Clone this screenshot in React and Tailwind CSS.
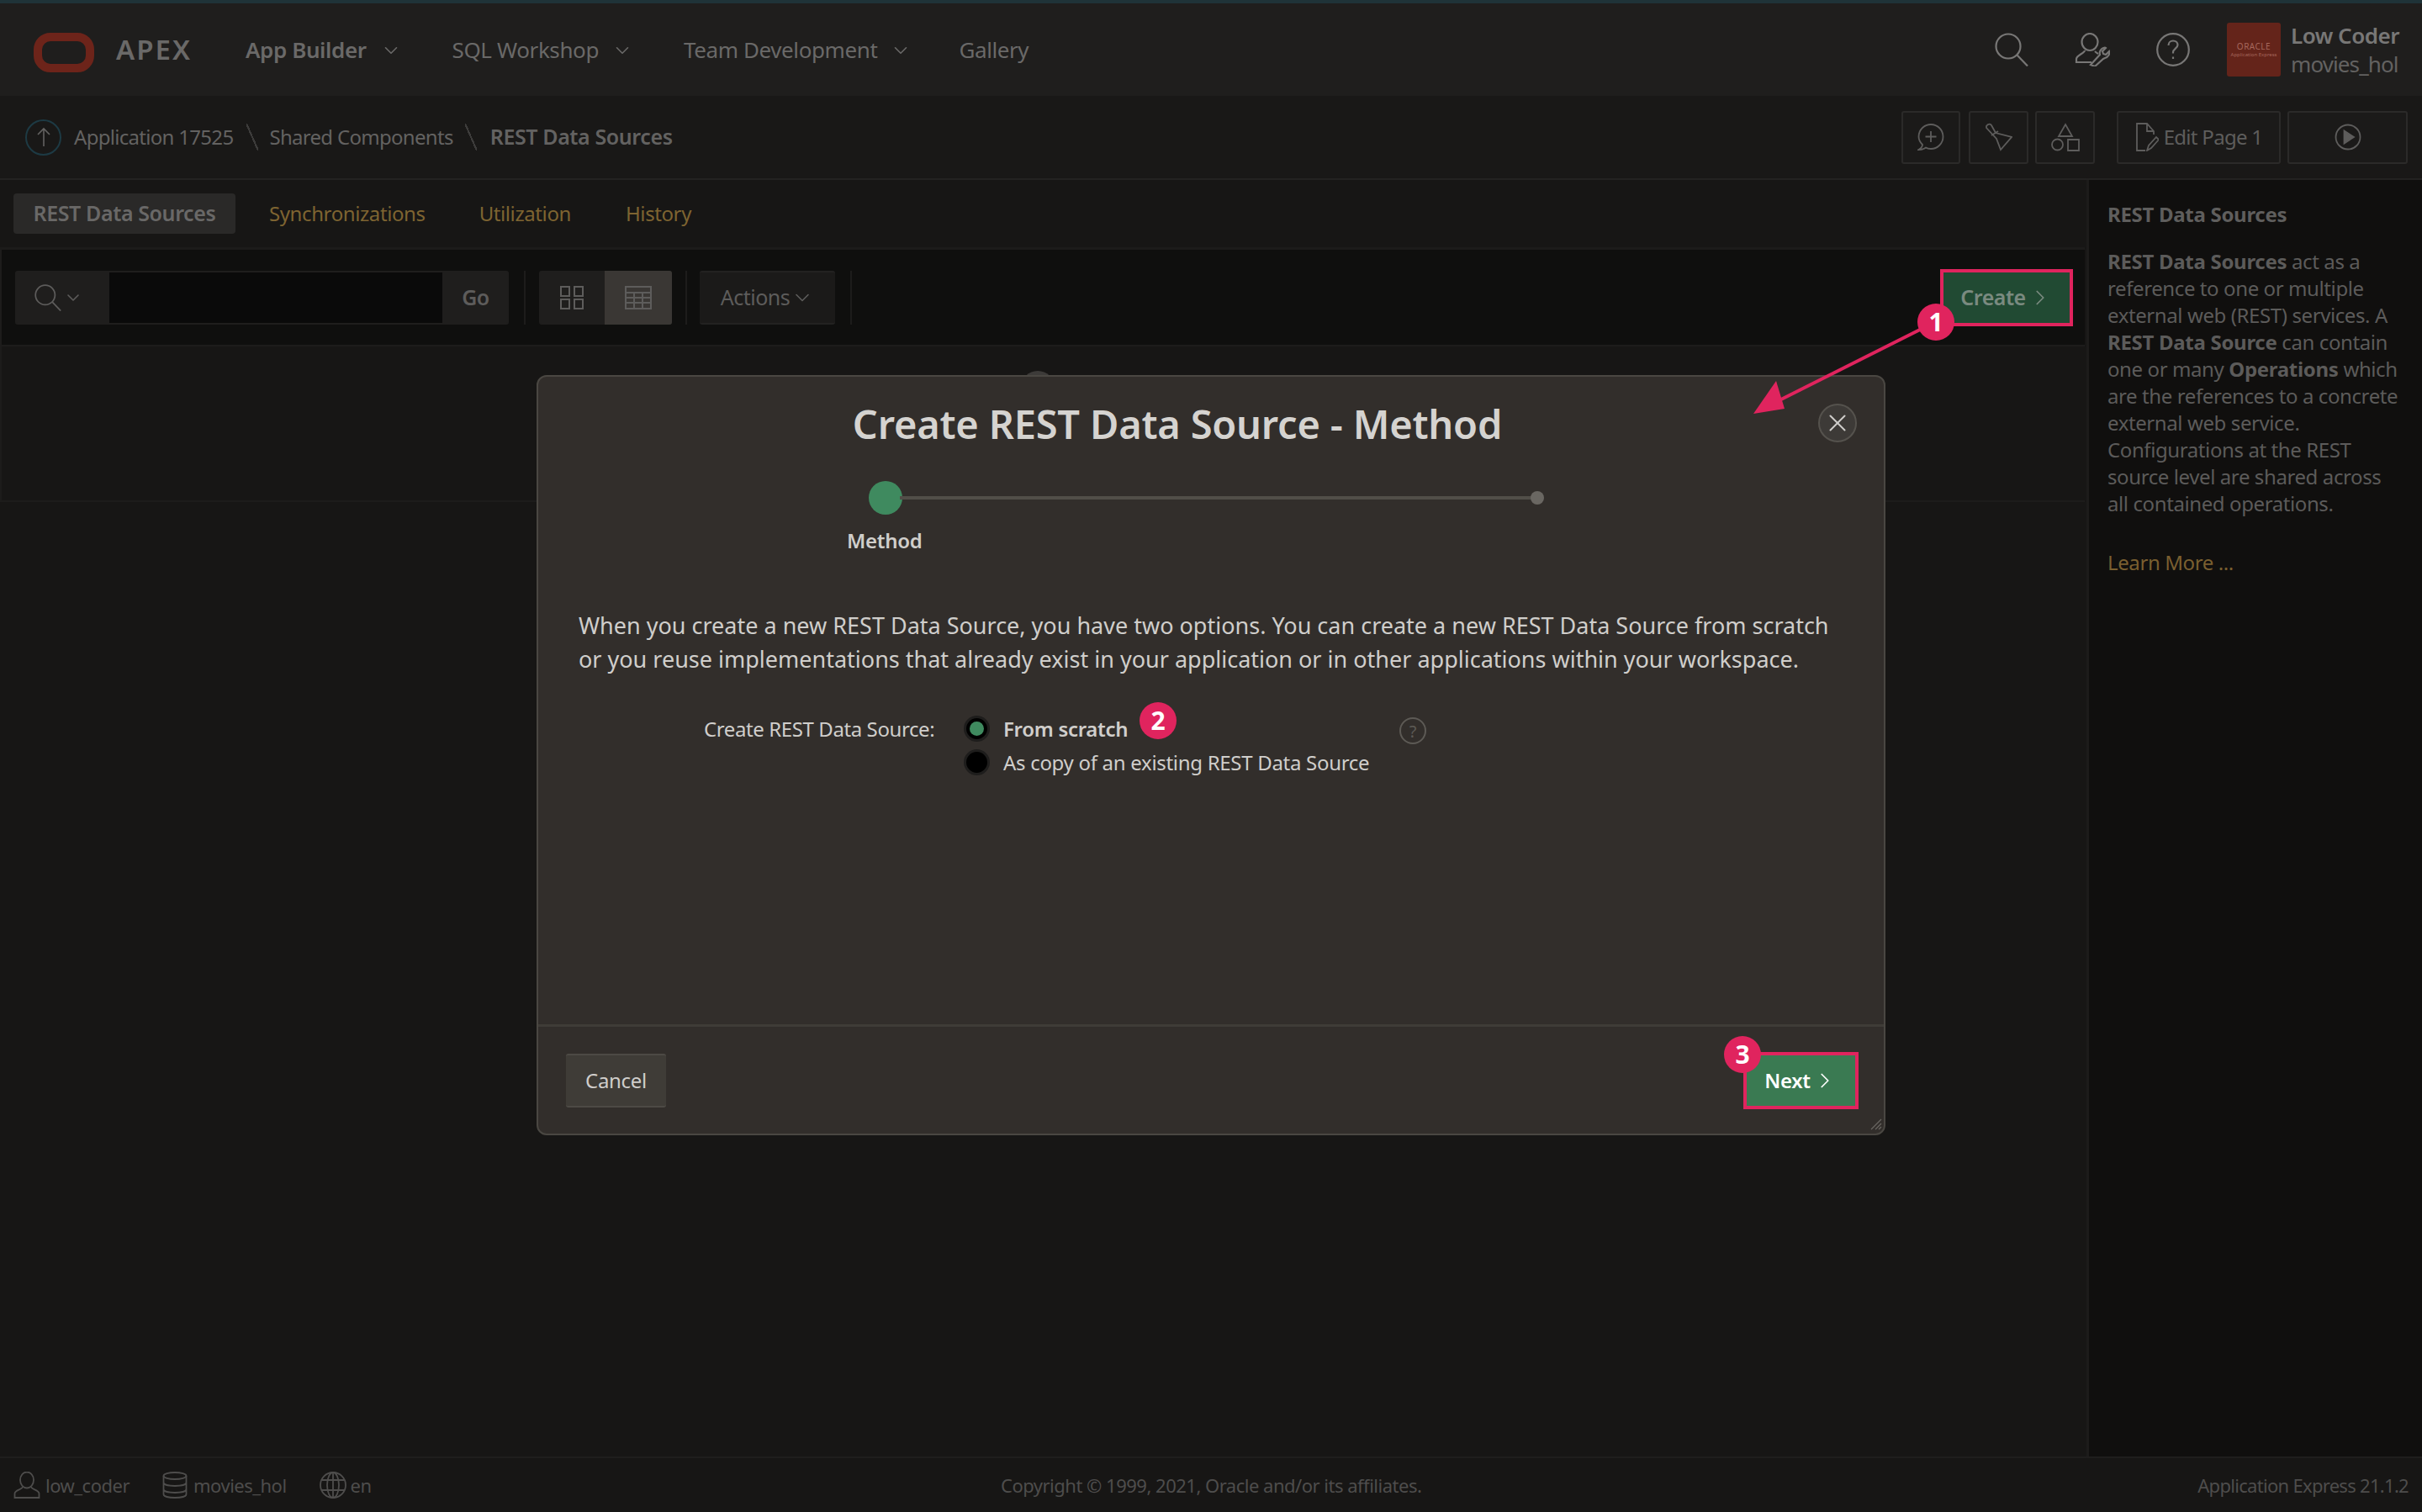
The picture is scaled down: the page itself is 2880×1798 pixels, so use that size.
import { ChevronDown, ChevronRight, X } from 'lucide-react';

const FONT = "font-['Noto_Sans',sans-serif]";

function SearchIcon({ className }) {
  return (
    <svg viewBox="0 0 40 40" fill="none" stroke="currentColor" strokeWidth="2.2" className={className}>
      <circle cx="16" cy="16" r="14.5" />
      <path d="M26.5 26.5L39 39.5" />
    </svg>
  );
}

function UserWrenchIcon({ className }) {
  return (
    <svg viewBox="0 0 42 40" fill="none" stroke="currentColor" strokeWidth="2.2" className={className}>
      <ellipse cx="18" cy="11" rx="9.5" ry="10" />
      <path d="M12 21c0 3-10 6-10 10v4h18M24 22c1 1 2 2 4 3" />
      <path d="M19 38l11-12c-1-3 1-7 4-8 1 0 2-1 3 0l-4 4 1 3 3 1 4-4c1 3-1 7-5 8l-2 1-10 9z" />
    </svg>
  );
}

function HelpIcon({ className }) {
  return (
    <svg viewBox="0 0 40 40" fill="none" stroke="currentColor" strokeWidth="2.2" className={className}>
      <circle cx="20" cy="20" r="18.8" />
      <path d="M14.5 15c0-3.5 2.5-5.5 5.5-5.5s5.5 2 5.5 5c0 4-5.5 4.5-5.5 9v1" />
      <path d="M20 28.5v2.5" />
    </svg>
  );
}

function OutlineButton({ className, children }) {
  return (
    <div className={`flex h-[63px] items-center justify-center rounded-[3px] border-2 border-[#2b2a29] bg-[#1b1a19] text-[#5e5d5c] ${className}`}>
      {children}
    </div>
  );
}

function Header() {
  return (
    <header className="flex h-[110px] items-center bg-[#1f1e1d] text-[26px] text-[#6a6968]">
      <div className="ml-[40px] mt-[6px] h-[47px] w-[72px] rounded-[20px] border-[10px] border-[#6d241a]" />
      <span className="ml-[26px] w-[154px] text-[33px] font-semibold tracking-[2px]">APEX</span>
      <span className="font-semibold tracking-[-0.4px]">App Builder</span>
      <ChevronDown className="ml-[16px] mt-[2px] size-[26px]" strokeWidth={1.5} />
      <span className="ml-[60px] tracking-[-0.4px]">SQL Workshop</span>
      <ChevronDown className="ml-[15px] mt-[2px] size-[26px]" strokeWidth={1.5} />
      <span className="ml-[60px] tracking-[-0.4px]">Team Development</span>
      <ChevronDown className="ml-[15px] mt-[2px] size-[26px]" strokeWidth={1.5} />
      <span className="ml-[56px] tracking-[-0.4px]">Gallery</span>
      <div className="ml-auto flex items-center text-[#787776]">
        <SearchIcon className="size-[40px]" />
        <UserWrenchIcon className="ml-[55px] h-[40px] w-[42px]" />
        <HelpIcon className="ml-[55px] size-[40px]" />
        <div className="ml-[44px] flex h-[64px] w-[64px] flex-col items-center justify-center rounded-[3px] bg-[#64241a] text-[#a5675c]">
          <span className="text-[10px] leading-[11px] tracking-[0.5px]">ORACLE</span>
          <span className="whitespace-nowrap text-[6px] leading-[8px]">Application Express</span>
        </div>
        <div className="ml-[12px] mr-[31px] flex w-[125px] flex-col whitespace-nowrap leading-[34px] tracking-[-0.5px]">
          <span className="font-semibold text-[#787776]">Low Coder</span>
          <span className="tracking-[-0.9px] text-[#636261]">movies_hol</span>
        </div>
      </div>
    </header>
  );
}

function BreadcrumbBar() {
  return (
    <div className="flex h-[100px] items-center border-b-[2px] border-[#232221] bg-[#191817] text-[24px] tracking-[-0.7px] text-[#636261]">
      <div className="ml-[30px] flex size-[43px] items-center justify-center rounded-full border-2 border-[#1d3a44]">
        <svg viewBox="0 0 20 24" fill="none" stroke="currentColor" strokeWidth="1.6" className="h-[24px] w-[20px]">
          <path d="M10 23V2M3 9l7-7 7 7" />
        </svg>
      </div>
      <span className="ml-[15px]">Application 17525</span>
      <span className="ml-[16px] h-[32px] w-[14px] bg-[linear-gradient(to_top_right,transparent_46%,#3d3c3b_46%,#3d3c3b_54%,transparent_54%)]" />
      <span className="ml-[13px]">Shared Components</span>
      <span className="ml-[14px] h-[32px] w-[14px] bg-[linear-gradient(to_top_right,transparent_46%,#3d3c3b_46%,#3d3c3b_54%,transparent_54%)]" />
      <span className="ml-[16px] text-[25px] font-semibold tracking-[-0.4px]">REST Data Sources</span>
      <div className="ml-auto mr-[17px] flex items-center">
        <OutlineButton className="w-[70px]">
          <svg viewBox="0 0 32 34" fill="none" stroke="currentColor" strokeWidth="1.8" className="h-[34px] w-[32px]">
            <path d="M6 26C3 23 1.500 20 1.500 16.500A14.500 14.500 0 1 1 16 31c-2.500 0-4.500-.5-6-1.500C8 31 5 32 1.500 32 4 30.500 6 28 6 26z" />
            <path d="M16 10v13M9.500 16.500h13" />
          </svg>
        </OutlineButton>
        <OutlineButton className="ml-[10px] w-[71px]">
          <svg viewBox="0 0 32 34" fill="none" stroke="currentColor" strokeWidth="1.8" className="h-[34px] w-[32px]">
            <path d="M1 4c2-3 5-3 6-1l5 9 19 5-13 15-5-13L1 6z" />
            <path d="M7 15l8-5" />
          </svg>
        </OutlineButton>
        <OutlineButton className="ml-[8px] w-[71px]">
          <svg viewBox="0 0 34 34" fill="none" stroke="currentColor" strokeWidth="1.8" className="h-[34px] w-[34px]">
            <path d="M17 2l8 14H9z" />
            <circle cx="7.500" cy="26" r="6.500" />
            <path d="M20 20h13v13H20z" />
          </svg>
        </OutlineButton>
        <OutlineButton className="ml-[26px] w-[195px]">
          <svg viewBox="0 0 28 34" fill="none" stroke="currentColor" strokeWidth="1.8" className="h-[34px] w-[28px]">
            <path d="M12 33H2V1h12l8 9v4M14 1v9h8" />
            <path d="M14 33l2-6 9-10 3 3-9 10z" />
          </svg>
          <span className="ml-[6px]">Edit Page 1</span>
        </OutlineButton>
        <OutlineButton className="ml-[8px] w-[143px]">
          <svg viewBox="0 0 32 32" fill="none" stroke="currentColor" strokeWidth="1.8" className="size-[32px]">
            <circle cx="16" cy="16" r="14.500" />
            <path d="M11.500 8.500L23 16l-11.500 7.500z" fill="currentColor" />
          </svg>
        </OutlineButton>
      </div>
    </div>
  );
}

function Tabs() {
  return (
    <div className="flex h-[83px] items-center border-b-[3px] border-[#1c1b1a] text-[24px] tracking-[-0.4px] text-[#7e6431]">
      <span className="ml-[16px] flex h-[48px] w-[264px] items-center justify-center rounded-[4px] bg-[#2a2928] text-[25px] font-semibold tracking-[-0.4px] text-[#696867]">
        REST Data Sources
      </span>
      <span className="ml-[40px]">Synchronizations</span>
      <span className="ml-[64px]">Utilization</span>
      <span className="ml-[65px]">History</span>
    </div>
  );
}

function Toolbar() {
  return (
    <div className="flex h-[115px] items-center border-b-[2px] border-l-[2px] border-[#1d1c1b] bg-[#0f0f0e] text-[24px] tracking-[-0.5px] text-[#5d5c5b]">
      <div className="ml-[16px] flex h-[64px] w-[587px] overflow-hidden rounded-[3px] border-y-2 border-[#1f1e1d] bg-[#1f1e1d]">
        <div className="flex w-[112px] items-center pl-[23px]">
          <SearchIcon className="size-[32px]" />
          <ChevronDown className="ml-[2px] size-[24px]" strokeWidth={1.6} />
        </div>
        <div className="w-[396px] bg-[#0a0a0a]" />
        <span className="flex flex-1 items-center justify-center text-[25px] font-semibold">Go</span>
      </div>
      <span className="ml-[18px] h-[64px] w-[2px] bg-[#1d1c1b]" />
      <div className="ml-[16px] flex h-[64px] w-[158px] overflow-hidden rounded-[3px] bg-[#1f1e1d]">
        <div className="flex w-[78px] items-center justify-center">
          <svg viewBox="0 0 28 28" fill="none" stroke="currentColor" strokeWidth="2" className="size-[28px]">
            <path d="M1 1h10v11H1zM17 1h10v11H17zM1 16h10v11H1zM17 16h10v11H17z" />
          </svg>
        </div>
        <div className="flex flex-1 items-center justify-center bg-[#3a3734]">
          <svg viewBox="0 0 32 28" fill="none" stroke="currentColor" strokeWidth="2" className="h-[28px] w-[32px]">
            <path d="M1 1h30v26H1zM1 8h30M1 14h30M1 20h30M11 8v19M21 8v19" />
          </svg>
        </div>
      </div>
      <span className="ml-[16px] h-[64px] w-[2px] bg-[#1d1c1b]" />
      <div className="ml-[15px] flex h-[64px] w-[161px] items-center justify-center rounded-[3px] border-y-2 border-[#232221] bg-[#1b1a19]">
        <span className="text-[25px]">Actions</span>
        <ChevronDown className="ml-[1px] size-[28px]" strokeWidth={1.4} />
      </div>
      <span className="ml-[18px] h-[64px] w-[2px] bg-[#1d1c1b]" />
      <div className="ml-auto mr-[14px] flex h-[68px] w-[158px] items-center justify-center border-4 border-[#e0245e] bg-[#214a33] text-[25px] font-semibold text-[#7a8a80]">
        Create
        <ChevronRight className="ml-[2px] size-[30px]" strokeWidth={1.4} />
      </div>
    </div>
  );
}

function SidePanel() {
  return (
    <aside className="w-[399px] border-l-[3px] border-[#1d1c1b] bg-[#100f0e] px-[22px] pt-[25px] text-[24px] leading-[32px] tracking-[-0.4px] text-[#5c5b5a]">
      <h2 className="font-bold tracking-[-0.3px] text-[#5f5e5d]">REST Data Sources</h2>
      <p className="mt-[24px] w-[350px]">
        <b className="font-bold tracking-[-0.3px]">REST Data Sources</b> act as a reference to one or multiple external
        web (REST) services. A <b className="font-bold tracking-[-0.3px]">REST Data Source</b> can contain one or many{' '}
        <b className="font-bold tracking-[-0.3px]">Operations</b> which are the references to a concrete external web
        service. Configurations at the REST source level are shared across all contained operations.
      </p>
      <p className="mt-[38px] text-[#7a5f30]">Learn More ...</p>
    </aside>
  );
}

function Footer() {
  return (
    <footer className="relative flex h-[66px] items-center border-t-2 border-[#1f1e1d] bg-[#171615] text-[22px] tracking-[-0.5px] text-[#4e4d4c]">
      <svg viewBox="0 0 32 32" fill="none" stroke="currentColor" strokeWidth="1.8" className="ml-[16px] size-[32px]">
        <ellipse cx="16" cy="10" rx="8" ry="9.500" />
        <path d="M11 18c0 3-9.500 4-9.500 8v5h29v-5c0-4-9.500-5-9.500-8" />
      </svg>
      <span className="ml-[6px]">low_coder</span>
      <svg viewBox="0 0 30 32" fill="none" stroke="currentColor" strokeWidth="1.8" className="ml-[39px] h-[32px] w-[30px]">
        <ellipse cx="15" cy="5" rx="13.500" ry="4" />
        <path d="M1.500 5v22c0 2.500 6 4 13.500 4s13.500-1.500 13.500-4V5M1.500 13c0 2.500 6 4 13.500 4s13.500-1.500 13.500-4M1.500 21c0 2.500 6 4 13.500 4s13.500-1.500 13.500-4" />
      </svg>
      <span className="ml-[7px]">movies_hol</span>
      <svg viewBox="0 0 32 32" fill="none" stroke="currentColor" strokeWidth="1.8" className="ml-[39px] size-[32px]">
        <circle cx="16" cy="16" r="15" />
        <ellipse cx="16" cy="16" rx="7" ry="15" />
        <path d="M16 1v30M3 10h26M3 22h26" />
      </svg>
      <span className="ml-[5px]">en</span>
      <span className="absolute left-[1190px]">Copyright © 1999, 2021, Oracle and/or its affiliates.</span>
      <span className="ml-auto mr-[16px] tracking-[-0.7px]">Application Express 21.1.2</span>
    </footer>
  );
}

function Badge({ n, className }) {
  return (
    <span className={`absolute flex size-[44px] items-center justify-center rounded-full bg-[#e0245e] text-[30px] font-bold leading-none text-white ${className}`}>
      {n}
    </span>
  );
}

function Radio({ checked }) {
  return (
    <span className="flex size-[31px] shrink-0 items-center justify-center rounded-full border-[3px] border-[#1e1d1c] bg-black">
      {checked && <span className="size-[17px] rounded-full bg-[#3f8a5f]" />}
    </span>
  );
}

function Modal() {
  return (
    <div className="absolute left-[638px] top-[446px] flex h-[904px] w-[1604px] flex-col rounded-[12px] border-2 border-[#4a4742] bg-[#322e2b] text-[#d0cecb]">
      <h1 className="mt-[26px] whitespace-nowrap text-center text-[47px] font-semibold leading-[60px] tracking-[-0.2px] text-[#d5d3d0]">
        <span className="relative left-[-40px]">Create REST Data Source - Method</span>
      </h1>
      <button className="absolute left-[1522px] top-[32px] flex size-[46px] items-center justify-center rounded-full border-2 border-[#55524d] bg-[#3d3a37] text-[#cfcdca]">
        <X className="size-[34px]" strokeWidth={1.4} />
      </button>
      <div className="relative mt-[38px] h-[40px]">
        <span className="absolute left-[393px] top-0 size-[40px] rounded-full bg-[#3f8a5f]" />
        <span className="absolute left-[430px] top-[18px] h-[4px] w-[752px] bg-[#514e48]" />
        <span className="absolute left-[1180px] top-[12px] size-[16px] rounded-full bg-[#6a6762]" />
      </div>
      <span className="ml-[367px] mt-[14px] text-[24px] font-semibold leading-[34px] tracking-[-0.3px]">Method</span>
      <p className="ml-[48px] mt-[64px] w-[1500px] text-[27px] leading-[40px] tracking-[0px]">
        When you create a new REST Data Source, you have two options. You can create a new REST Data Source from scratch
        or you reuse implementations that already exist in your application or in other applications within your
        workspace.
      </p>
      <div className="ml-[197px] mt-[47px] flex text-[24px] leading-[31px] tracking-[-0.3px]">
        <span className="w-[309px] tracking-[-0.4px]">Create REST Data Source:</span>
        <div className="flex flex-col gap-[9px]">
          <div className="flex items-center gap-[16px]">
            <Radio checked />
            <span className="font-semibold">From scratch</span>
          </div>
          <div className="flex items-center gap-[16px]">
            <Radio />
            <span>As copy of an existing REST Data Source</span>
          </div>
        </div>
        <span className="absolute left-[1024px] top-[405px] flex size-[32px] items-center justify-center rounded-full border-2 border-[#5d5a55] text-[20px] text-[#5d5a55]">
          ?
        </span>
      </div>
      <div className="mt-auto flex h-[130px] items-center justify-between border-t-[3px] border-[#3f3c37] pl-[33px] pr-[30px]">
        <span className="flex h-[64px] w-[119px] items-center justify-center rounded-[3px] border-y-2 border-[#4d4a45] bg-[#3f3c37] text-[24px] tracking-[-0.3px]">
          Cancel
        </span>
        <span className="flex h-[68px] w-[137px] items-center justify-center border-4 border-[#e0245e] bg-[#3a7a52] text-[24px] font-semibold tracking-[-0.3px] text-white">
          Next
          <ChevronRight className="ml-[2px] size-[30px]" strokeWidth={1.4} />
        </span>
      </div>
      <svg viewBox="0 0 14 14" stroke="#6a6762" strokeWidth="1.2" className="absolute bottom-[4px] right-[2px] size-[14px]">
        <path d="M1 13L13 1M6 13L13 6M10 13l3-3" />
      </svg>
    </div>
  );
}

export default function App() {
  return (
    <div className={`relative flex h-[1798px] w-[2880px] flex-col overflow-hidden bg-[#171615] ${FONT}`}>
      <div className="h-[4px] bg-[#1f3338]" />
      <Header />
      <BreadcrumbBar />
      <div className="flex flex-1">
        <main className="flex-1 pr-[2px]">
          <Tabs />
          <Toolbar />
          <div className="relative h-[185px] border-b-[2px] border-l-[2px] border-[#1d1c1b]">
            <span className="absolute left-[1212px] top-[29px] size-[40px] rounded-full bg-[#3d3b39]" />
          </div>
        </main>
        <SidePanel />
      </div>
      <Footer />
      <Modal />
      <svg viewBox="0 0 2880 1798" fill="none" className="absolute left-0 top-0 h-[1798px] w-[2880px]">
        <path d="M2285 391L2096 486" stroke="#e0245e" strokeWidth="4" />
        <path d="M2085 492L2112 453 2122 486z" fill="#e0245e" />
      </svg>
      <Badge n="1" className="left-[2280px] top-[361px]" />
      <Badge n="2" className="left-[1355px] top-[835px]" />
      <Badge n="3" className="left-[2050px] top-[1232px]" />
    </div>
  );
}
